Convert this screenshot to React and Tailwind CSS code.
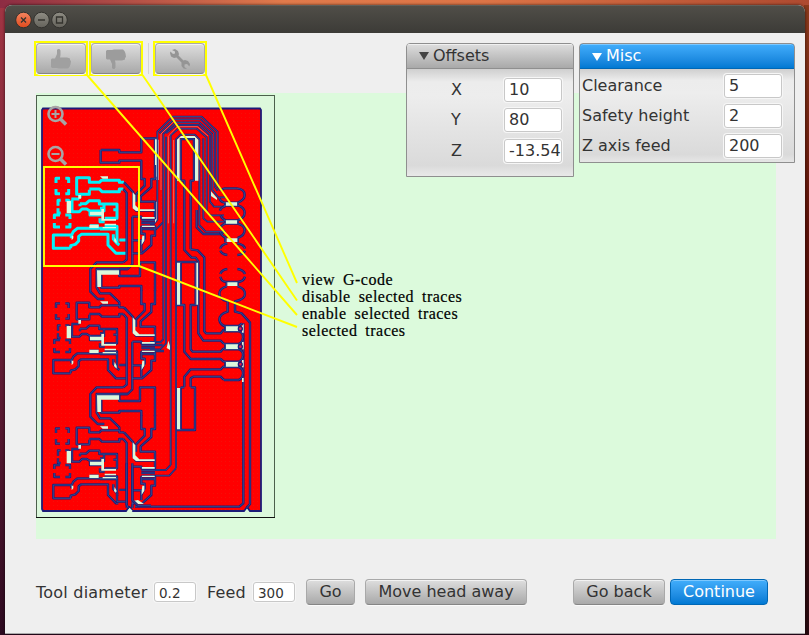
import React from "react";

const NAVY = "#1d1b78";
const STEEL = "#44749c";
const PALE = "#dcf8dc";

/* A routed contour: dark outer edge with a lighter core. */
function Trace({ d, cyan, thin }) {
  return (
    <g fill="none" strokeLinejoin="round">
      <path d={d} stroke={cyan ? "#00f4fc" : NAVY} strokeWidth={cyan ? 9 : thin ? 5.5 : 7.2} />
      <path d={d} stroke={cyan ? "#20dce8" : STEEL} strokeWidth={cyan ? 0.8 : 1.6} />
    </g>
  );
}

const DASHES =
  "M60 54V40H72M88 40H98V54M60 72V86H72M88 86H98V72M66 122V106H74M66 130V144H74M88 106H98V112M55 162V150H72M88 150H102V162M55 174V186H72M88 186H102V174";

const LEFT_PART =
  "M128 88H122V38H160V52H190L196 46H208M160 74V88H132V100M160 72H190L198 80H250V72H262M208 46H250V52H264" +
  "M108 104V140H130L138 132H152L162 138M106 102H130M132 116H150L160 107H190V117H243V160H206M132 124V116M162 138H203V130H192M203 150H162V136M204 118V140M232 134H243" +
  "M206 170H192V160M162 182H188M206 184H243V192H192M106 220V210H52V250H104M106 212L112 200L124 190H243V235L250 240" +
  "M104 250V242L118 238L128 228V214L136 208H216V240L240 265H272M232 208V222L243 235M250 225H272";

const RIGHT_PART =
  "M262 72L272 84V284L262 292M264 52L292 82V125L300 137H357M289 155V298L275 312H250M289 155H316V160H357V110H314V94L346 66V42H357V0M316 0V42H326V62L300 88V110" +
  "M316 166H357M316 174H357M316 184H357V212H346V240L318 265H289M316 184V206H326V220L316 240M289 226H316V260M318 192H357";

const LINK =
  "M262 292H182L163 312V380L185 402H205M182 315H250V333H312V292H357V377M275 312H182V368L192 385H222L250 412V420M196 330V368H250V363H316V377";

function Module({ y, selected }) {
  return (
    <g transform={`translate(36 ${y}) scale(.33333)`}>
      <Trace d={DASHES} cyan={selected} />
      <Trace d={LEFT_PART} cyan={selected} />
      <Trace d={RIGHT_PART} />
      <g fill={PALE}>
        <path d="M92 108h13v37H92zM162 140h34v-8h8v30h36v5h-44v-16h-34zM160 179h28v10h-28zM206 176h34v5h-34zM200 186h40v4h-40zM192 34h24v7h-16z" />
        <path d="M290 82l8 9v30l12 12h46v5h-56l-10-8zM318 156h38v5h-38zM318 182h38v4h-38zM325 212v15l-8 12v-12l2-15zM107 212h5v8l-5 6zM236 216l6 12v8l-8-8zM127 90h8v11h-8z" />
      </g>
    </g>
  );
}

function Link({ y }) {
  return (
    <g transform={`translate(36 ${y}) scale(.33333)`}>
      <Trace d={LINK} />
      <path d="M183 316H249V329H195V366H184z" fill={PALE} />
    </g>
  );
}

function Bus() {
  return (
    <g transform="translate(150 90) scale(.33333)">
      <Trace thin d="M0 145H22V125L68 80H155L203 125V290L212 302M22 145V390L12 402H0M0 418H18L40 396V132L77 97H148L187 132V300L205 322H225" />
      <Trace thin d="M28 130L72 88H152L195 128V290L203 302M48 130L80 105H146L180 136V335L192 350H222M40 396V748L32 756H0M48 140V760L30 778H0" />
      <Trace thin d="M62 1125V136L86 116H140L170 142V365L182 376H222M62 1125L48 1140H0M78 1135V148L92 134H134L148 148V405L167 425H222M78 1135L58 1157H0M160 145V385L172 395H222" />
      <Trace d="M92 147H132V272M92 147V272H103V480L125 503H137L145 514V730L160 752H212L222 762M122 478V272H132M122 478L143 481L163 502V724L168 730H212L222 718M140 360V412L160 432H215L225 422" />
      <Trace d="M80 516H137V645H122V778L128 785H212L222 774M92 516V645H103V785L122 807H212L222 816M78 645H103M103 890V860L122 838H212L222 828M92 892H103M122 890V865L130 860H212L222 870M92 892V1020H135V892H122M80 1020H92" />
      <Trace d="M222 295H260Q284 296 284 315Q284 330 263 338V346Q284 352 284 368Q284 384 263 391V401Q284 406 284 421Q284 437 263 444M212 302L222 295M222 338Q210 334 208 324M226 348Q212 352 210 362M226 391Q214 386 212 376M226 401Q212 406 210 416M230 444Q216 440 210 426M226 336V348M226 390V402M226 443V457M263 443V457M222 338H263M222 347H263M222 391H263M222 401H263" />
      <Trace d="M232 460Q213 464 211 476M262 460Q283 464 285 476M211 482Q215 493 232 495M262 495Q280 493 285 482M211 552Q214 540 232 537M262 537Q281 540 285 552M211 560Q214 575 230 576H263Q281 575 285 560" />
      <Trace d="M230 589Q208 595 208 612Q208 628 233 634V665Q208 672 208 690Q210 703 226 710M263 589Q285 595 285 612Q285 628 255 634V665L275 670L300 698V1242L290 1254M280 700V1240L268 1250H-45M230 576V589M263 576V589" />
      <Trace d="M222 708H266L276 700M222 724H266Q280 727 279 742Q278 758 266 762H222M222 778H266Q280 782 279 796Q278 811 266 815H222M222 831H266Q280 836 279 850Q278 866 266 870H222M226 708V724M226 762V778M226 815V831M266 708V724M266 762V778M266 815V831" />
      <g fill={PALE}>
        <path d="M228 337h33v10h-33zM228 391h33v10h-33zM230 445h32v11h-32zM232 577h30v11h-30zM228 709h36v14h-36zM228 763h36v14h-36zM228 816h36v14h-36z" />
        <path d="M276 708l5-6v26h-5zM276 756h5v22h-5zM276 810h5v22h-5zM276 864h5v12h-5z" />
        <path d="M81 272V149L93 138H134L145 149V272H135V144H89V272zM81 518h9v126h-9zM139 518h5v126h-5zM81 894h9v124h-9zM15 148h5v112h-5zM15 335h5v55l-5 8zM55 752l5 16v12l-10-6zM183 304l18 20v6l-18-12z" />
        <path d="M54 140L82 110H142L174 138M33 300V132L74 92" fill="none" stroke={PALE} strokeWidth="2" opacity=".55" />
        <path d="M55 400V140M71 400V150" fill="none" stroke={PALE} strokeWidth="2.500" opacity=".5" />
      </g>
      <g fill="#e21d50" stroke={NAVY} strokeWidth="4">
        <circle cx="271" cy="716" r="6" /><circle cx="271" cy="770" r="6" /><circle cx="271" cy="823" r="6" />
      </g>
    </g>
  );
}

function Board() {
  return (
    <svg className="block h-[424px] w-[239px] shrink-0" viewBox="36 95 239 424">
      <defs>
        <pattern id="hatch" width="4" height="4" patternUnits="userSpaceOnUse">
          <rect width="4" height="4" fill="#ff0000" />
          <rect width="1" height="1" x="1" y="1" fill="#f51008" />
        </pattern>
        <clipPath id="last"><rect x="36" y="400" width="130" height="108" /></clipPath>
      </defs>
      <rect x="36.5" y="95.5" width="238" height="422" fill={PALE} stroke="#4c604c" />
      <path d="M36 517.5H275" stroke="#111" />
      <path d="M43 108.5H260L261 110V511H250L247 507L244 511H133L129.500 507L126 511H43L42 509V110z" fill="url(#hatch)" stroke={NAVY} strokeWidth="1.800" />
      <g transform="translate(36 165) scale(.33333)">
        <Trace d="M194 -45H250V-38H316V-80H357V0M194 -45V-7H250V-13H316V0" />
        <path d="M360 -76h8V45h-8z" fill={PALE} />
      </g>
      <Bus />
      <Link y={165} />
      <Link y={290} />
      <Module y={290} />
      <g clipPath="url(#last)"><Module y={415} /></g>
      <Module y={165} selected />
      <g transform="translate(36 400) scale(.33333)">
        <path d="M247 273H268V325H247zM293 300h30l-10 14h-16zM276 275h10v38h-10z" fill="#ff0000" />
        <path d="M294 302l12-2l18 12h-22zM274 333l7-10 9 10z" fill={PALE} />
        <Trace d="M272 190V314L277 324M289 190V300L306 317H345M243 275V305H268" />
      </g>
      <g transform="translate(36 290) scale(.33333)">
        <Trace d="M357 165H380M357 183H384" />
      </g>
      {[115, 155].map((y) => (
        <g key={y} fill="none" stroke="#a8a5a5" strokeWidth="2.600">
          <circle cx="55.500" cy={y - 1} r="7" />
          <path d={`M60.500 ${y + 4}L66 ${y + 9.500}`} strokeWidth="3.500" />
          <path d={y === 115 ? "M51.500 114H59.500M55.500 110V118" : "M51.500 154H59.500"} strokeWidth="2" />
        </g>
      ))}
    </svg>
  );
}

const BTN =
  "flex items-center justify-center rounded-[4px] border border-[#a9a9a9] border-b-[#858585] bg-gradient-to-b from-[#dedede] to-[#a9a9a9] shadow-[inset_0_1px_0_#f3f3f3,0_1px_0_#fafafa]";

function ToolButton({ children }) {
  return (
    <div className="h-[35px] w-[54px] border-2 border-[#ffff00] bg-[#efefef]">
      <div className={BTN + " h-full w-full"}>{children}</div>
    </div>
  );
}

const THUMB = "M0 10.500L1 9.500H4L6 5V1L7 0H8.500L9.500 1.500V6L9 8.500H16L19 9.500V11L20 12L19.500 15.500L18.500 18L17 19.500H8L6 19H1L0 18z";

function Field({ value, className }) {
  return (
    <div className={"flex items-center overflow-hidden whitespace-nowrap rounded-[3px] border border-[#c8c8c8] bg-white shadow-[0_0_0_1px_#f6f6f6] " + className}>
      {value}
    </div>
  );
}

const BODY = "bg-[linear-gradient(#cfcfcf,#ececec_12%,#ededed_25%,#dadada_90%,#e9e9e9)]";

export default function App() {
  return (
    <div className="relative h-[635px] w-[809px] overflow-hidden bg-[linear-gradient(#a23543,#6b2038_50%,#2d0a20)] pt-[5px] pl-[5px] text-[16px] leading-[20px] text-[#333] [font-family:'DejaVu_Sans',sans-serif]">
      <div className="absolute inset-x-0 top-0 h-[8px] bg-[linear-gradient(90deg,#8d2c43,#e07a4b_35%,#dc7446_60%,#ae4a30)]" />
      <div className="absolute top-[5px] right-0 h-[630px] w-[5px] bg-[linear-gradient(#8b3a1c,#5b1108_35%,#280a10)]" />
      <div className="relative flex h-[629px] w-[800px] flex-col overflow-hidden rounded-t-[7px] border-b border-[#aaa] bg-[#efefef] shadow-[0_0_3px_rgba(0,0,0,0.7)]">
        <header className="flex h-[28px] shrink-0 items-center gap-[2px] border-t border-[#62605a] bg-gradient-to-b from-[#504e48] to-[#3c3b37] pl-[10px]">
          <svg className="h-[18px] w-[54px]" viewBox="0 0 54 18">
            <defs>
              <linearGradient id="red" x2="0" y2="1"><stop stopColor="#f58560" /><stop offset="1" stopColor="#df4a1c" /></linearGradient>
              <linearGradient id="gray" x2="0" y2="1"><stop stopColor="#8f8d84" /><stop offset="1" stopColor="#64625b" /></linearGradient>
            </defs>
            <g stroke="#33322e">
              <circle cx="8.500" cy="9" r="7.800" fill="url(#red)" />
              <circle cx="26.500" cy="9" r="7.800" fill="url(#gray)" />
              <circle cx="44.500" cy="9" r="7.800" fill="url(#gray)" />
            </g>
            <path d="M6 6.500L11 11.500M11 6.500L6 11.500M23 9H30M41.500 6H47.500V12H41.500z" fill="none" stroke="#34332e" strokeWidth="1.300" />
          </svg>
        </header>
        <div className="flex h-[60px] shrink-0 items-start pt-[8px] pl-[29px]">
          <ToolButton>
            <svg className="h-5 w-5" viewBox="0 0 20 20"><path d={THUMB} fill="#a0a0a0" /></svg>
          </ToolButton>
          <div className="ml-px"><ToolButton>
            <svg className="h-5 w-5" viewBox="0 0 20 20"><path d={THUMB} fill="#9c9c9c" transform="matrix(1 0 0 -1 0 20)" /></svg>
          </ToolButton></div>
          <div className="mt-[2px] mr-[4px] ml-[5px] h-[31px] w-px bg-[#d5d5d5]" />
          <ToolButton>
            <svg className="h-5 w-5" viewBox="0 0 20 20">
              <path d="M2 1L5 0L8 2L9 5L8.500 6.500L13.500 11.500L15 11L18 12L20 15L19.500 17.500L17 15L14.500 15.500L14.500 18L17 20L13.500 19.500L11.500 17L11.500 13.500L6.500 8.500L4 9L1 7.500L0 4L0.500 2.500L3 5L5 4.500L5 2.500z" fill="#959595" />
            </svg>
          </ToolButton>
        </div>
        <main className="ml-[31px] flex h-[446px] w-[740px] shrink-0 items-start bg-[#dcfadc] pt-[2px]">
          <Board />
          <div className="mt-[176px] ml-[27px] whitespace-pre text-[16px] leading-[17px] tracking-[0.48px] [word-spacing:3.500px] text-black [-webkit-text-stroke:0.2px_black] [font-family:'Liberation_Serif',serif]">
            <div>view G-code</div>
            <div>disable selected traces</div>
            <div>enable selected traces</div>
            <div>selected traces</div>
          </div>
        </main>
        <footer className="mt-[40px] flex h-[26px] shrink-0 items-center pl-[31px] whitespace-nowrap">
          <span className="w-[118px] pt-[2px] tracking-[0.22px]">Tool diameter</span>
          <Field value="0.2" className="h-[20px] w-[42px] pt-px pl-[4px] text-[13.500px]" />
          <span className="ml-[11px] w-[46px] pt-[2px] tracking-[0.2px]">Feed</span>
          <Field value="300" className="h-[20px] w-[42px] pt-px pl-[4px] text-[13.500px]" />
          <div className={BTN + " ml-[11px] h-[26px] w-[49px]"}>Go</div>
          <div className={BTN + " ml-[10px] h-[26px] w-[162px]"}>Move head away</div>
          <div className={BTN + " ml-[46px] h-[26px] w-[92px]"}>Go back</div>
          <div className="ml-[5px] flex h-[26px] w-[98px] items-center justify-center rounded-[4px] border border-[#0067b5] bg-gradient-to-b from-[#41aefc] to-[#0079d3] text-white shadow-[inset_0_1px_0_#7cc8ff]">Continue</div>
        </footer>
      </div>

      <section className="absolute top-[43px] left-[406px] flex h-[134px] w-[168px] flex-col overflow-hidden rounded-t-[4px] border border-[#8f8f8f]">
        <div className="flex h-[25px] shrink-0 items-center border-b border-[#8f8f8f] bg-gradient-to-b from-[#dedede] to-[#a9a9a9] pl-[12px] shadow-[inset_0_1px_0_#f0f0f0]">
          <svg className="mr-[4px] h-[8px] w-[10px]" viewBox="0 0 10 8"><path d="M0 0H10L5 8z" fill="#444" /></svg>
          Offsets
        </div>
        <div className={"grow pt-[9px] " + BODY}>
          {[["X", "10"], ["Y", "80"], ["Z", "-13.54"]].map(([k, v]) => (
            <div key={k} className="mb-[6px] flex h-[24px] items-center pl-[44px] last:mt-[7px]">
              <span className="w-[53px]">{k}</span>
              <Field value={v} className="h-[24px] w-[58px] pl-[4px]" />
            </div>
          ))}
        </div>
      </section>

      <section className="absolute top-[43px] left-[579px] flex h-[120px] w-[216px] flex-col overflow-hidden rounded-t-[4px] border border-[#8f8f8f]">
        <div className="-mx-px -mt-px flex h-[26px] shrink-0 items-center rounded-t-[4px] border border-[#0067b5] bg-gradient-to-b from-[#41aefc] to-[#0079d3] pl-[12px] text-white shadow-[inset_0_1px_0_#7cc8ff]">
          <svg className="mt-[2px] mr-[4px] h-[8px] w-[10px]" viewBox="0 0 10 8"><path d="M0 0H10L5 8z" fill="#fff" /></svg>
          Misc
        </div>
        <div className={"grow pt-[5px] " + BODY}>
          {[["Clearance", "5"], ["Safety height", "2"], ["Z axis feed", "200"]].map(([k, v]) => (
            <div key={k} className="mb-[6px] flex h-[24px] items-center pl-[2px]">
              <span className="w-[142px]">{k}</span>
              <Field value={v} className="h-[24px] w-[58px] pl-[4px]" />
            </div>
          ))}
        </div>
      </section>

      <svg className="pointer-events-none absolute inset-0" width="809" height="635" viewBox="0 0 809 635">
        <path d="M87 75L297 315M142.500 75L297 300.500M206 75L297 283M139 266L297 327M44 167H139V266H44z" fill="none" stroke="#ffff00" strokeWidth="1.900" />
      </svg>
    </div>
  );
}
